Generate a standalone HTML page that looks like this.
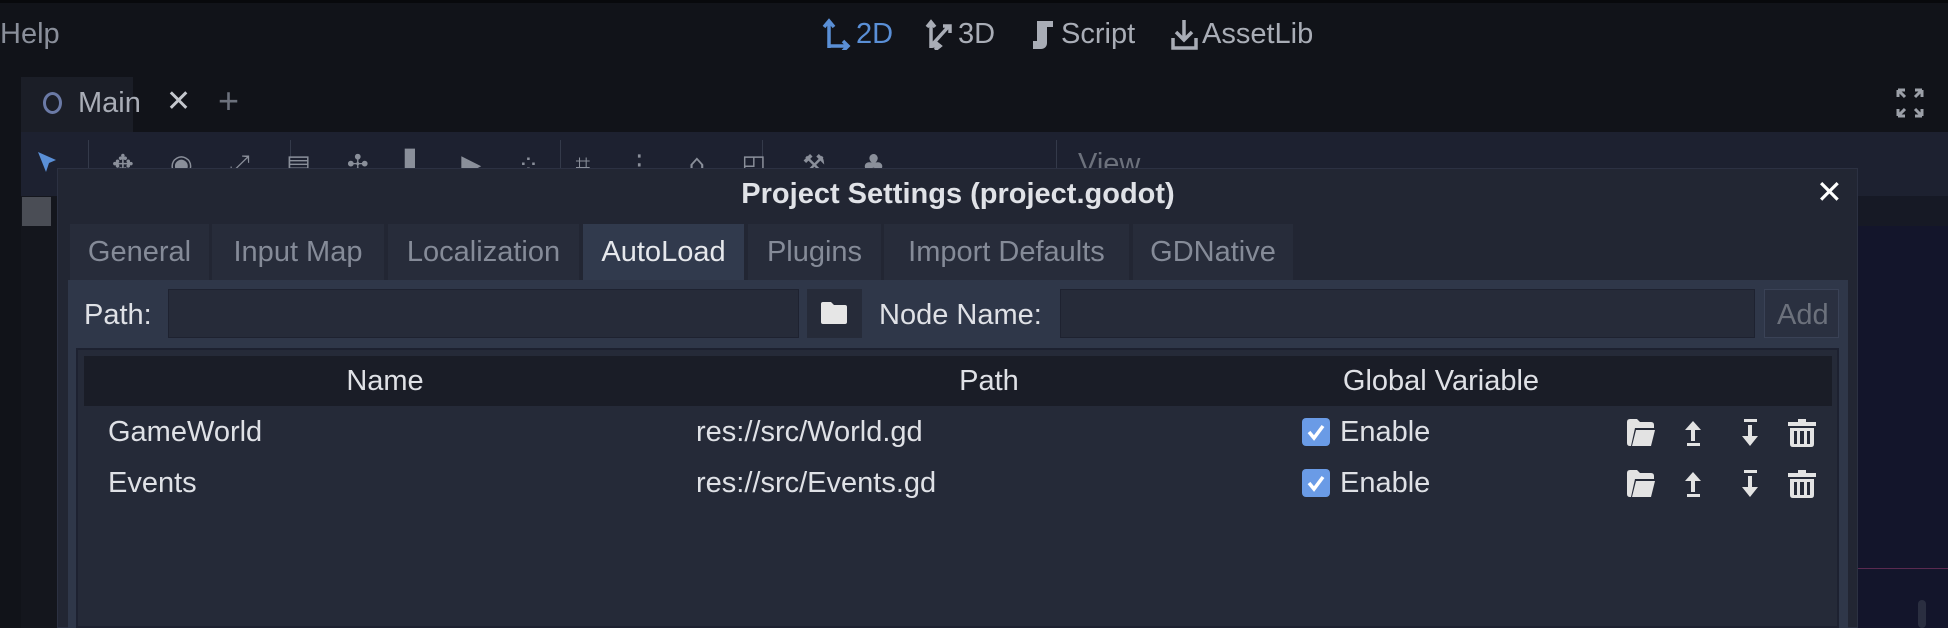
<!DOCTYPE html>
<html><head><meta charset="utf-8"><style>
*{margin:0;padding:0;box-sizing:border-box}
body{width:1948px;height:628px;overflow:hidden;background:#111319;font-family:"Liberation Sans",sans-serif;color:#dfe1e6;position:relative}
.a{position:absolute}
.t{position:absolute;font-size:29px;line-height:1;white-space:nowrap}
.tab{position:absolute;top:224px;height:56px;background:#272c3a;color:#858b98;font-size:29px;line-height:56px;text-align:center}
.inp{position:absolute;background:#262b39;border:1px solid #1e2230}
.ic{position:absolute}
.c{position:absolute;text-align:center;font-size:29px;line-height:1;white-space:nowrap}
</style></head><body>
<div class="a" style="left:0;top:0;width:1948px;height:3px;background:#08090c"></div>
<div class="t" style="left:0;top:20px;color:#8a8f9a">Help</div>
<svg class="ic" style="left:822px;top:18px" width="30" height="32" viewBox="0 0 30 32"><path d="M7 30V4M2 9l5-6 5 6M7 28h18M21 23l5 5-5 5" stroke="#5a8fd6" stroke-width="3.5" fill="none"/></svg>
<div class="t" style="left:856px;top:20px;color:#5a8fd6">2D</div>
<svg class="ic" style="left:925px;top:18px" width="30" height="32" viewBox="0 0 30 32"><path d="M6 30V4M2 9l4-5 4 5M6 28h10M10 24l5 4-5 4M6 28L24 8M18 8h7v7" stroke="#a9adb6" stroke-width="3.5" fill="none"/></svg>
<div class="t" style="left:958px;top:20px;color:#a9adb6">3D</div>
<svg class="ic" style="left:1029px;top:18px" width="28" height="32" viewBox="0 0 28 32"><path d="M8 3h16v6h-6v16c0 4-3 6-6 6H4v-8h4z" fill="#a9adb6"/></svg>
<div class="t" style="left:1061px;top:20px;color:#a9adb6">Script</div>
<svg class="ic" style="left:1170px;top:18px" width="30" height="32" viewBox="0 0 30 32"><path d="M14 2v20M6 14l8 8 8-8M3 20v10h23V20" stroke="#a9adb6" stroke-width="3.5" fill="none"/></svg>
<div class="t" style="left:1202px;top:20px;color:#a9adb6">AssetLib</div>
<div class="a" style="left:21px;top:77px;width:112px;height:56px;background:#1b1e27"></div>
<div class="a" style="left:43px;top:92px;width:19px;height:22px;border:3.5px solid #6b7aa6;border-radius:50%"></div>
<div class="t" style="left:78px;top:89px;color:#a9adb6">Main</div>
<div class="t" style="left:166px;top:87px;color:#c4c7cd;font-size:30px">✕</div>
<div class="t" style="left:218px;top:83px;color:#6c717c;font-size:36px">+</div>
<svg class="ic" style="left:1896px;top:88px" width="28" height="30" viewBox="0 0 28 30"><path d="M2 2l7 7M2 2v7M2 2h7M26 2l-7 7M26 2v7M26 2h-7M2 28l7-7M2 28v-7M2 28h7M26 28l-7-7M26 28v-7M26 28h-7" stroke="#9ca0a8" stroke-width="3" fill="none"/></svg>
<div class="a" style="left:21px;top:132px;width:1927px;height:496px;background:#1d2130"></div>
<svg class="ic" style="left:36px;top:150px" width="24" height="24" viewBox="0 0 24 24"><path d="M2 2l18 8-7 3-3 9z" fill="#5a8fd6"/></svg>
<div class="a" style="left:88px;top:140px;width:1px;height:30px;background:#343a4a"></div>
<div class="a" style="left:290px;top:140px;width:1px;height:30px;background:#343a4a"></div>
<div class="a" style="left:560px;top:140px;width:1px;height:30px;background:#343a4a"></div>
<div class="a" style="left:762px;top:140px;width:1px;height:30px;background:#343a4a"></div>
<div class="a" style="left:1056px;top:140px;width:1px;height:30px;background:#343a4a"></div>
<div class="t" style="left:1078px;top:150px;color:#6c717c">View</div>
<div style="position:absolute;left:112px;top:150px;color:#8a8f9a;font-size:26px;font-family:'DejaVu Sans',sans-serif;word-spacing:28px;white-space:nowrap">✥ ◉ ⤢ ▤ ✣ ▌ ▶ ⁘ ⌗ ⋮ ⌂ ◰ ⚒ ♣</div>
<div class="a" style="left:21px;top:196px;width:36px;height:432px;background:#14161d"></div>
<div class="a" style="left:22px;top:197px;width:29px;height:29px;background:#4a4d55"></div>
<div class="a" style="left:1858px;top:196px;width:90px;height:30px;background:#161925"></div>
<div class="a" style="left:1858px;top:226px;width:90px;height:402px;background:#13152b"></div>
<div class="a" style="left:1858px;top:568px;width:90px;height:1px;background:#5a2a50"></div>
<div class="a" style="left:1918px;top:600px;width:8px;height:28px;background:#2a2e40;border-radius:4px"></div>
<div class="a" style="left:57px;top:168px;width:1801px;height:460px;background:#222633;border:1px solid #2c3142"></div>
<div class="t" style="left:0;width:1916px;text-align:center;top:180px;font-weight:bold;font-size:29px;color:#e0e2e7">Project Settings (project.godot)</div>
<div class="t" style="left:1816px;top:176px;font-size:32px;color:#fff">✕</div>
<div class="tab" style="left:70px;width:139px">General</div>
<div class="tab" style="left:212px;width:172px">Input Map</div>
<div class="tab" style="left:388px;width:191px">Localization</div>
<div class="tab" style="left:583px;width:161px;background:#313a4d;color:#e6e8ec">AutoLoad</div>
<div class="tab" style="left:748px;width:133px">Plugins</div>
<div class="tab" style="left:884px;width:245px">Import Defaults</div>
<div class="tab" style="left:1133px;width:160px">GDNative</div>
<div class="a" style="left:68px;top:280px;width:1780px;height:348px;background:#2f3749"></div>
<div class="t" style="left:84px;top:301px">Path:</div>
<div class="inp" style="left:168px;top:289px;width:631px;height:49px"></div>
<div class="a" style="left:807px;top:289px;width:55px;height:49px;background:#262b39"></div>
<svg class="ic" style="left:820px;top:301px" width="28" height="24" viewBox="0 0 28 24"><path d="M1 3q0-2 2-2h8l3 3h11q2 0 2 2v15q0 2-2 2H3q-2 0-2-2z" fill="#e6e6e6"/></svg>
<div class="t" style="left:879px;top:301px">Node Name:</div>
<div class="inp" style="left:1060px;top:289px;width:695px;height:49px"></div>
<div class="a" style="left:1764px;top:289px;width:75px;height:49px;background:#2a3040;border:1px solid #3a4256"></div>
<div class="t" style="left:1777px;top:301px;color:#6c717c">Add</div>
<div class="a" style="left:76px;top:348px;width:1763px;height:280px;background:#252a38;border:2px solid #1d2130"></div>
<div class="a" style="left:84px;top:356px;width:1748px;height:50px;background:#1a1d27"></div>
<div class="c" style="left:285px;width:200px;top:367px">Name</div>
<div class="c" style="left:889px;width:200px;top:367px">Path</div>
<div class="c" style="left:1291px;width:300px;top:367px">Global Variable</div>
<div class="t" style="left:108px;top:418px">GameWorld</div>
<div class="t" style="left:696px;top:418px">res://src/World.gd</div>
<div class="t" style="left:108px;top:469px">Events</div>
<div class="t" style="left:696px;top:469px">res://src/Events.gd</div>
<div class="a" style="left:1302px;top:418px;width:28px;height:28px;background:#6a9be6;border-radius:4px"></div>
<svg class="ic" style="left:1302px;top:418px" width="28" height="28"><path d="M7 14l5 6 9-12" stroke="#fff" stroke-width="3.5" fill="none"/></svg>
<div class="t" style="left:1340px;top:418px">Enable</div>
<div class="a" style="left:1302px;top:469px;width:28px;height:28px;background:#6a9be6;border-radius:4px"></div>
<svg class="ic" style="left:1302px;top:469px" width="28" height="28"><path d="M7 14l5 6 9-12" stroke="#fff" stroke-width="3.5" fill="none"/></svg>
<div class="t" style="left:1340px;top:469px">Enable</div>
<svg class="ic" style="left:1626px;top:418px" width="200" height="84" viewBox="0 0 200 84">
<g id="ico" fill="#e3e3e3" stroke="none">
<path d="M1 4q0-3 3-3h7l3 3h11q3 0 3 3v3H9l-4 18H4q-3 0-3-3zM10 12h19l-4 16H6z"/>
<path d="M67 3l-8 9h6v11h4V12h6zM61 25h13v3H61z"/>
<path d="M118 1h13v3h-13zM122 7h4v11h6l-8 10-8-10h6z"/>
<path d="M172 1h8v3h10v4h-28V4h10zM164 10h24v16q0 3-3 3h-18q-3 0-3-3zM168 13v13h3V13zM174 13v13h4V13zM181 13v13h3V13z" fill-rule="evenodd"/>
</g>
<use href="#ico" y="51"/>
</svg>
</body></html>
